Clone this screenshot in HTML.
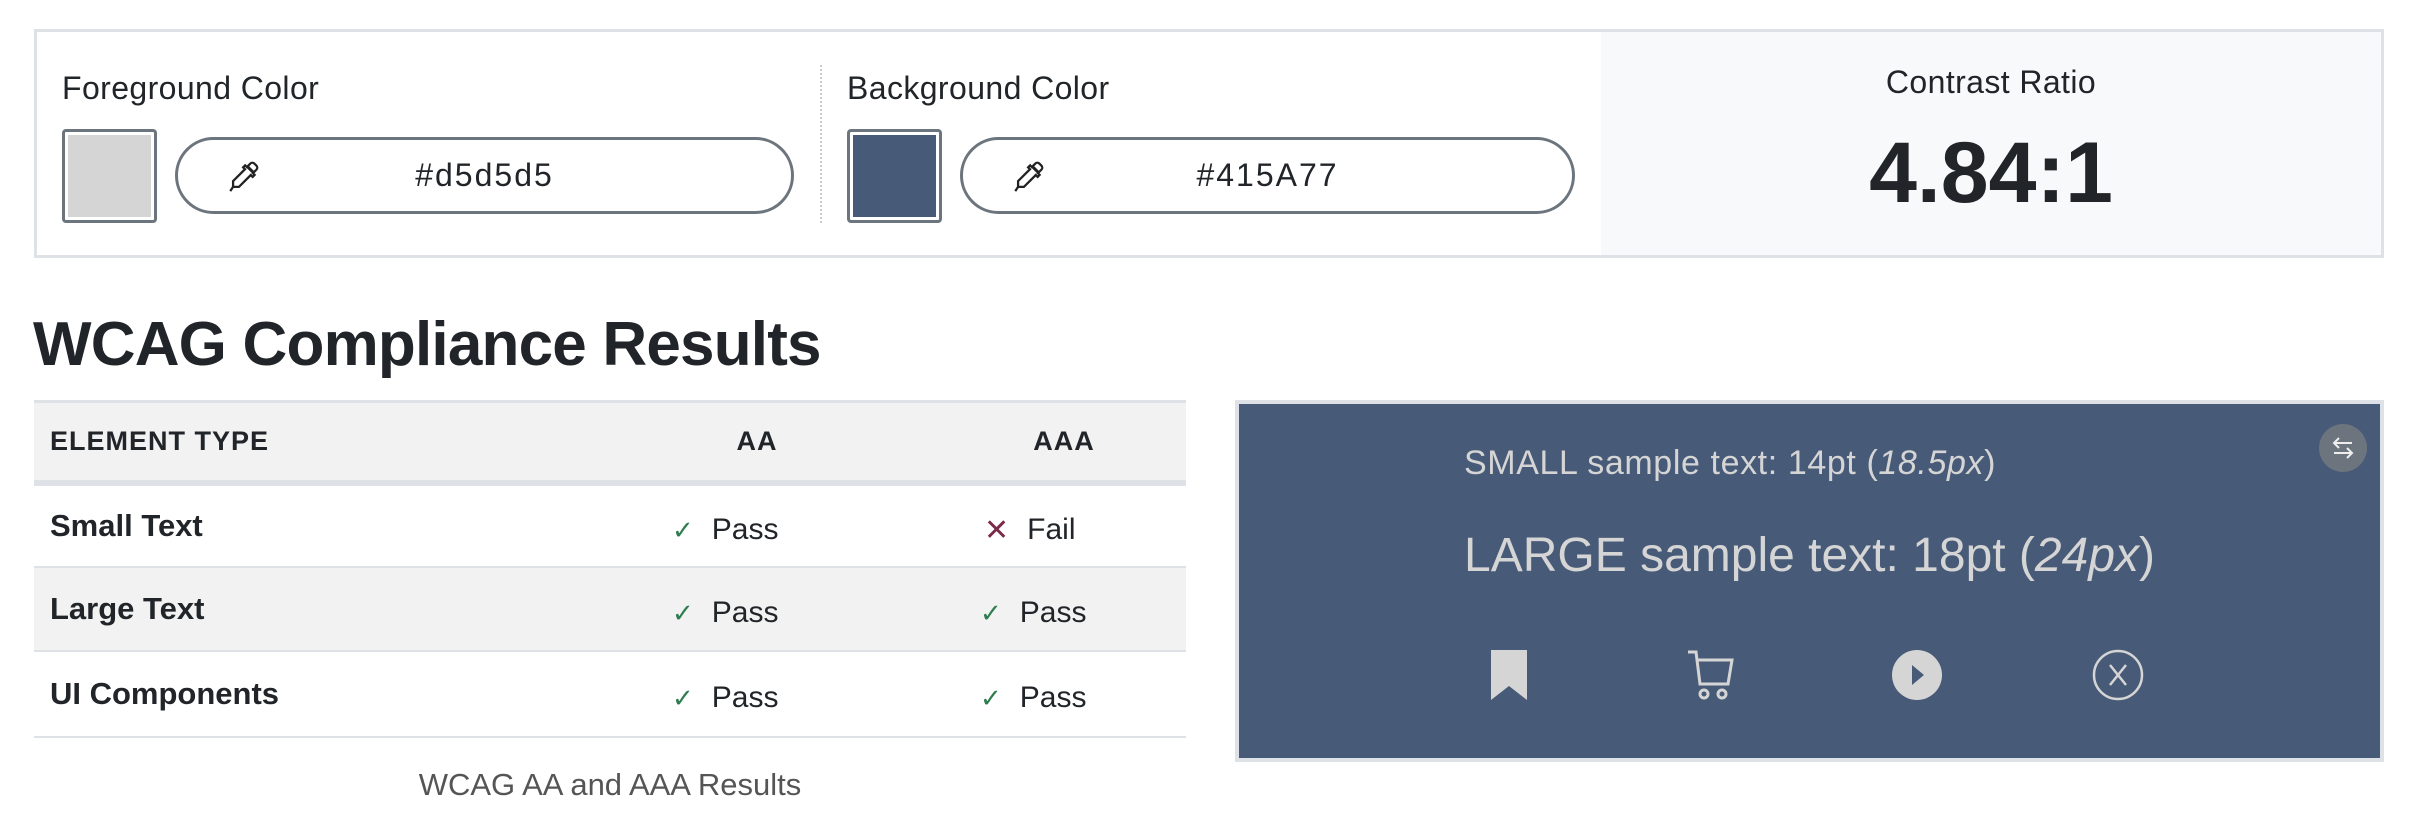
<!DOCTYPE html>
<html><head><meta charset="utf-8"><style>
*{box-sizing:border-box;margin:0;padding:0}
body{width:2412px;height:824px;background:#fff;font-family:"Liberation Sans",sans-serif;color:#212529;position:relative;overflow:hidden}
.abs{position:absolute}
.panel{left:34px;top:29px;width:2350px;height:229px;border:3px solid #dee2e6;background:#fff}
.cr{left:1601px;top:32px;width:780px;height:223px;background:#f8f9fa}
.lbl{font-size:32px;letter-spacing:0.4px;color:#212529}
.sw{width:95px;height:94px;border:3px solid #6c757d;border-radius:4px;padding:3px;background:#fff}
.sw div{width:100%;height:100%}
.pill{height:77px;border:3px solid #6c757d;border-radius:40px;background:#fff;font-size:32px;line-height:71px;text-align:center;letter-spacing:2px}
.pill svg{position:absolute;left:48px;top:20px}
.row{left:34px;width:1152px;font-size:31px}
.cell{position:absolute;top:0;height:100%;display:flex;align-items:center}
.chk{color:#2e7d4f;font-size:26px;margin-right:18px}
.p{font-size:30px}
</style></head><body>
<div class="abs panel"></div>
<div class="abs cr"></div>
<div class="abs lbl" style="left:62px;top:70px">Foreground Color</div>
<div class="abs sw" style="left:62px;top:129px"><div style="background:#d5d5d5"></div></div>
<div class="abs pill" style="left:175px;top:137px;width:619px">
<svg width="34" height="34" viewBox="0 0 24 24"><path d="M20 2.5a2 2 0 0 0-2.8 0l-2.5 2.5-1.2-1.2-1.4 1.4 1.3 1.3L5 14.9V19H9.1l8.4-8.4 1.3 1.3 1.4-1.4-1.2-1.2 2.5-2.5a2 2 0 0 0 0-2.8z" fill="none" stroke="#222" stroke-width="1.6"/><path d="M14 5l5 5 1.5-1.5-5-5z" fill="#222"/><path d="M5 19l-2 3" stroke="#222" stroke-width="1.6"/></svg>#d5d5d5</div>
<div class="abs" style="left:820px;top:65px;height:158px;border-left:2px dotted #ccc"></div>
<div class="abs lbl" style="left:847px;top:70px">Background Color</div>
<div class="abs sw" style="left:847px;top:129px"><div style="background:#475a77"></div></div>
<div class="abs pill" style="left:960px;top:137px;width:615px">
<svg width="34" height="34" viewBox="0 0 24 24"><path d="M20 2.5a2 2 0 0 0-2.8 0l-2.5 2.5-1.2-1.2-1.4 1.4 1.3 1.3L5 14.9V19H9.1l8.4-8.4 1.3 1.3 1.4-1.4-1.2-1.2 2.5-2.5a2 2 0 0 0 0-2.8z" fill="none" stroke="#222" stroke-width="1.6"/><path d="M14 5l5 5 1.5-1.5-5-5z" fill="#222"/><path d="M5 19l-2 3" stroke="#222" stroke-width="1.6"/></svg>#415A77</div>
<div class="abs lbl" style="left:1601px;width:780px;text-align:center;top:64px">Contrast Ratio</div>
<div class="abs" style="left:1601px;width:780px;text-align:center;top:118px;font-size:86px;font-weight:bold;line-height:110px">4.84:1</div>

<div class="abs" style="left:33px;top:309px;font-size:62px;font-weight:bold;letter-spacing:-0.8px">WCAG Compliance Results</div>

<div class="abs" style="left:34px;top:400px;width:1152px;height:3px;background:#dee2e6"></div>
<div class="abs row" style="top:403px;height:77px;background:#f2f2f2;font-size:27px;font-weight:bold;letter-spacing:1px">
<div class="cell" style="left:16px">ELEMENT TYPE</div>
<div class="cell" style="left:689px;width:68px;justify-content:center">AA</div>
<div class="cell" style="left:960px;width:140px;justify-content:center">AAA</div></div>
<div class="abs" style="left:34px;top:480px;width:1152px;height:6px;background:#dee2e6"></div>

<div class="abs row" style="top:486px;height:82px;border-bottom:2px solid #dee2e6">
<div class="cell" style="left:16px;font-weight:bold">Small Text</div>
<div class="cell p" style="left:638px;top:4px"><span class="chk">✓</span>Pass</div>
<div class="cell p" style="left:950px;top:4px"><span style="color:#7a2a4a;font-size:30px;margin-right:18px">✕</span>Fail</div></div>
<div class="abs row" style="top:568px;height:84px;background:#f2f2f2;border-bottom:2px solid #dee2e6">
<div class="cell" style="left:16px;font-weight:bold">Large Text</div>
<div class="cell p" style="left:638px;top:4px"><span class="chk">✓</span>Pass</div>
<div class="cell p" style="left:946px;top:4px"><span class="chk">✓</span>Pass</div></div>
<div class="abs row" style="top:652px;height:86px;border-bottom:2px solid #dee2e6">
<div class="cell" style="left:16px;font-weight:bold">UI Components</div>
<div class="cell p" style="left:638px;top:4px"><span class="chk">✓</span>Pass</div>
<div class="cell p" style="left:946px;top:4px"><span class="chk">✓</span>Pass</div></div>
<div class="abs" style="left:34px;width:1152px;top:767px;text-align:center;font-size:31px;color:#555">WCAG AA and AAA Results</div>

<div class="abs" style="left:1235px;top:400px;width:1149px;height:362px;border:4px solid #dee2e6;background:#475a77;color:#d5d5d5">
<div class="abs" style="left:225px;top:40px;font-size:34px;letter-spacing:0.6px">SMALL sample text: 14pt (<i>18.5px</i>)</div>
<div class="abs" style="left:225px;top:124px;font-size:48px">LARGE sample text: 18pt (<i>24px</i>)</div>
<div class="abs" style="left:1080px;top:20px;width:48px;height:48px;border-radius:50%;background:#6c757d">
<svg width="48" height="48" viewBox="0 0 48 48" fill="none" stroke="#eee" stroke-width="2"><path d="M33 19H15M20 14l-5 5 5 5M15 29h18M28 24l5 5-5 5"/></svg></div>
<svg class="abs" style="left:248px;top:244px" width="44" height="54" viewBox="0 0 44 54"><path d="M4 2h36v50L22 38 4 52z" fill="#d5d5d5"/></svg>
<svg class="abs" style="left:445px;top:244px" width="54" height="54" viewBox="0 0 54 54" fill="none" stroke="#d5d5d5" stroke-width="3"><path d="M4 4h8l4 32h28l4-24H14"/><circle cx="20" cy="46" r="4"/><circle cx="38" cy="46" r="4"/></svg>
<svg class="abs" style="left:651px;top:244px" width="54" height="54" viewBox="0 0 54 54"><circle cx="27" cy="27" r="25" fill="#d5d5d5"/><path d="M22 17l12 10-12 10z" fill="#475a77"/></svg>
<svg class="abs" style="left:852px;top:244px" width="54" height="54" viewBox="0 0 54 54" fill="none" stroke="#d5d5d5" stroke-width="2.5"><circle cx="27" cy="27" r="24"/><path d="M19 17l16 20M35 17L19 37"/></svg>
</div>
</body></html>
